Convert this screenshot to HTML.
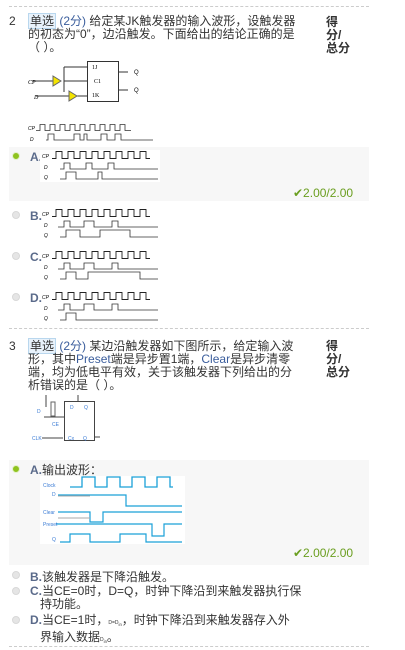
<!DOCTYPE html>
<html><head><meta charset="utf-8"><style>
body{margin:0;width:405px;height:650px;background:#fff;font-family:"Liberation Sans","Noto Sans CJK SC",sans-serif;font-size:12px;color:#333;position:relative;overflow:hidden}
.a{position:absolute}
.dash{position:absolute;left:9px;width:360px;border-top:1px dashed #ccc;height:0}
.tag{border:1px solid #b9d7ee;background:#e8f2fb;color:#333;padding:0 1px}
.blue{color:#3a5d9c}
.q{line-height:13px}
.score{font-weight:bold;line-height:13px;font-size:12px;color:#333}
.bg{position:absolute;left:9px;width:360px;background:#f7f7f7}
.rad{position:absolute;width:6px;height:6px;border-radius:50%;background:#e5e5e5;border:1px solid #d8d8d8}
.rad.on{background:#8fc31f;border-color:#e4f1cc}
.ok{color:#6a9e1f;font-size:12px}
.lab{font-weight:bold;color:#5a6a8a}
svg path{stroke-linejoin:miter}
</style></head><body>

<div class="dash" style="top:6px"></div>
<div class="a q" style="left:9px;top:15px">2</div>
<div class="a q" style="left:28px;top:15px;width:275px"><span class="tag">单选</span> <span class="blue">(2分)</span> 给定某JK触发器的输入波形，设触发器的初态为“0”，边沿触发。下面给出的结论正确的是（ ）。</div>
<div class="a score" style="left:326px;top:16px">得<br>分/<br>总分</div>

<svg class="a" style="left:28px;top:58px" width="130" height="90">
<rect x="59.5" y="3.5" width="31" height="40" fill="#fff" stroke="#333"/>
<path d="M36 9H60M36 9V34M4 23H30M36 23H60M8 38H44M46 38H60M91 14H100M91 32H100" stroke="#333" fill="none"/>
<path d="M25 18L33 23L25 28Z" fill="#f4e400" stroke="#666"/>
<path d="M41 33L49 38L41 43Z" fill="#f4e400" stroke="#666"/>
<text x="0" y="26" font-size="6" font-family="Liberation Serif" font-style="italic">CP</text>
<text x="6" y="41" font-size="6" font-family="Liberation Serif" font-style="italic">D</text>
<text x="64" y="11" font-size="6" font-family="Liberation Serif">1J</text>
<text x="66" y="25" font-size="6" font-family="Liberation Serif">C1</text>
<text x="64" y="39" font-size="6" font-family="Liberation Serif">1K</text>
<text x="106" y="16" font-size="6">Q</text><text x="106" y="34" font-size="6">Q</text>
<path d="M8 72.5h4v-6h5v6h5v-6h5v6h5v-6h5v6h5v-6h5v6h5v-6h5v6h5v-6h5v6h5v-6h5v6h5v-6h5v6h5v-6h5v6h6" stroke="#333" fill="none" stroke-width="0.8"/>
<path d="M18 82H20V76H26V82H46V76H52V82H56V76H59V82H73V76H79V82H87V76H93V82H125" stroke="#333" fill="none" stroke-width="0.8"/>
<text x="0" y="72" font-size="5" font-style="italic">CP</text><text x="2" y="83" font-size="5" font-style="italic">D</text>
</svg>

<div class="bg" style="top:147px;height:54px"></div>
<div class="rad on" style="left:12px;top:152px"></div>
<div class="a lab" style="left:30px;top:150px">A.</div>
<svg class="a" style="left:40px;top:150px;background:#fff" width="120" height="32">
<path d="M12 8.5h4v-7h6v7h6v-7h6v7h6v-7h6v7h6v-7h6v7h6v-7h6v7h6v-7h6v7h6v-7h6v7h6v-7h6v7h4" stroke="#222" fill="none" stroke-width="0.9"/>
<path d="M20 19H24V13H30V19H46V13H52V19H68V13H74V19H118" stroke="#333" fill="none" stroke-width="0.8"/>
<path d="M20 29H26V22H36V29H58V22H62V29H118" stroke="#333" fill="none" stroke-width="0.8"/>
<text x="2" y="8" font-size="5" font-style="italic">CP</text><text x="4" y="19" font-size="5" font-style="italic">D</text><text x="4" y="29" font-size="5" font-style="italic">Q</text></svg>
<div class="a ok" style="left:293px;top:186px">✔2.00/2.00</div>

<div class="rad" style="left:12px;top:211px"></div>
<div class="a lab" style="left:30px;top:209px">B.</div>
<svg class="a" style="left:40px;top:208px" width="120" height="32">
<path d="M12 8.5h4v-7h6v7h6v-7h6v7h6v-7h6v7h6v-7h6v7h6v-7h6v7h6v-7h6v7h6v-7h6v7h6v-7h6v7h4" stroke="#222" fill="none" stroke-width="0.9"/>
<path d="M18 19H24V13H30V19H44V13H54V19H72V13H78V19H118" stroke="#333" fill="none" stroke-width="0.8"/>
<path d="M20 29H26V22H40V29H60V22H90V29H118" stroke="#333" fill="none" stroke-width="0.8"/>
<text x="2" y="8" font-size="5" font-style="italic">CP</text><text x="4" y="19" font-size="5" font-style="italic">D</text><text x="4" y="29" font-size="5" font-style="italic">Q</text></svg>

<div class="rad" style="left:12px;top:252px"></div>
<div class="a lab" style="left:30px;top:250px">C.</div>
<svg class="a" style="left:40px;top:250px" width="120" height="32">
<path d="M12 8.5h4v-7h6v7h6v-7h6v7h6v-7h6v7h6v-7h6v7h6v-7h6v7h6v-7h6v7h6v-7h6v7h6v-7h6v7h4" stroke="#222" fill="none" stroke-width="0.9"/>
<path d="M18 19H24V13H30V19H44V13H54V19H72V13H78V19H118" stroke="#333" fill="none" stroke-width="0.8"/>
<path d="M20 29H26V22H36V29H48V22H100V29H118" stroke="#333" fill="none" stroke-width="0.8"/>
<text x="2" y="8" font-size="5" font-style="italic">CP</text><text x="4" y="19" font-size="5" font-style="italic">D</text><text x="4" y="29" font-size="5" font-style="italic">Q</text></svg>

<div class="rad" style="left:12px;top:293px"></div>
<div class="a lab" style="left:30px;top:291px">D.</div>
<svg class="a" style="left:40px;top:291px" width="120" height="32">
<path d="M12 8.5h4v-7h6v7h6v-7h6v7h6v-7h6v7h6v-7h6v7h6v-7h6v7h6v-7h6v7h6v-7h6v7h6v-7h6v7h4" stroke="#222" fill="none" stroke-width="0.9"/>
<path d="M18 19H24V13H30V19H44V13H54V19H72V13H78V19H118" stroke="#333" fill="none" stroke-width="0.8"/>
<path d="M20 29H26V22H36V29H118" stroke="#333" fill="none" stroke-width="0.8"/>
<text x="2" y="8" font-size="5" font-style="italic">CP</text><text x="4" y="19" font-size="5" font-style="italic">D</text><text x="4" y="29" font-size="5" font-style="italic">Q</text></svg>

<div class="dash" style="top:328px"></div>
<div class="a q" style="left:9px;top:340px">3</div>
<div class="a q" style="left:28px;top:340px;width:270px"><span class="tag">单选</span> <span class="blue">(2分)</span> 某边沿触发器如下图所示，给定输入波形，其中<span class="blue">Preset</span>端是异步置1端，<span class="blue">Clear</span>是异步清零端，均为低电平有效，关于该触发器下列给出的分析错误的是（ ）。</div>
<div class="a score" style="left:326px;top:340px">得<br>分/<br>总分</div>

<svg class="a" style="left:30px;top:395px" width="70" height="50">
<rect x="34.5" y="6.5" width="30" height="39" fill="#fff" stroke="#444"/>
<path d="M16 0V12M14 22H34M48 0V6M64 42H70" stroke="#444" fill="none"/>
<rect x="21" y="7" width="4" height="14" fill="none" stroke="#666"/>
<text x="7" y="18" font-size="5" fill="#3a7bd5">D</text>
<text x="40" y="14" font-size="5" fill="#3a7bd5">D</text><text x="54" y="14" font-size="5" fill="#3a7bd5">Q</text>
<text x="22" y="31" font-size="5" fill="#3a7bd5">CE</text>
<path d="M12 43H33" stroke="#444"/>
<text x="2" y="45" font-size="5" fill="#3a7bd5">CLK</text>
<text x="38" y="45" font-size="5" fill="#3a7bd5">Cx</text><text x="53" y="45" font-size="5" fill="#3a7bd5">Q</text>
</svg>

<div class="bg" style="top:460px;height:105px"></div>
<div class="rad on" style="left:12px;top:465px"></div>
<div class="a" style="left:30px;top:461px"><span class="lab">A.</span>输出波形：</div>
<svg class="a" style="left:40px;top:476px;background:#fff" width="145" height="68">
<path d="M30 11h12v-10h13v10h12v-10h13v10h12v-10h13v10h12v-10h13v10h3" stroke="#1aa0d8" fill="none" stroke-width="1.3"/>
<path d="M18 19H86V30H142" stroke="#1aa0d8" fill="none" stroke-width="1.2"/>
<path d="M18 20H50" stroke="#aaa"/>
<path d="M18 36H50V46H63V36H142" stroke="#1aa0d8" fill="none" stroke-width="1.2"/>
<path d="M18 42H50" stroke="#aaa"/>
<path d="M16 48H112V60H124V48H142" stroke="#1aa0d8" fill="none" stroke-width="1.2"/>
<path d="M20 66H30V58H50V66H80V58H106V66H142" stroke="#1aa0d8" fill="none" stroke-width="1.2"/>
<text x="3" y="11" font-size="5" fill="#3a7bd5">Clock</text><text x="12" y="20" font-size="5" fill="#3a7bd5">D</text><text x="3" y="38" font-size="5" fill="#3a7bd5">Clear</text><text x="3" y="50" font-size="5" fill="#3a7bd5">Preset</text><text x="12" y="65" font-size="5" fill="#3a7bd5">Q</text>
</svg>
<div class="a ok" style="left:293px;top:546px">✔2.00/2.00</div>

<div class="rad" style="left:12px;top:571px"></div>
<div class="a" style="left:30px;top:568px"><span class="lab">B.</span>该触发器是下降沿触发。</div>
<div class="rad" style="left:12px;top:587px"></div>
<div class="a q" style="left:30px;top:585px;width:275px"><span class="lab">C.</span>当CE=0时，D=Q，时钟下降沿到来触发器执行保<br>&nbsp;&nbsp;&nbsp;持功能。</div>
<div class="rad" style="left:12px;top:616px"></div>
<div class="a q" style="left:30px;top:614px;width:275px"><span class="lab">D.</span>当CE=1时，<span style="font-size:5px">D=D<sub>in</sub></span>，时钟下降沿到来触发器存入外<br>&nbsp;&nbsp;&nbsp;界输入数据<span style="font-size:5px">D<sub>in</sub></span>。</div>
<div class="dash" style="top:646px"></div>
</body></html>
